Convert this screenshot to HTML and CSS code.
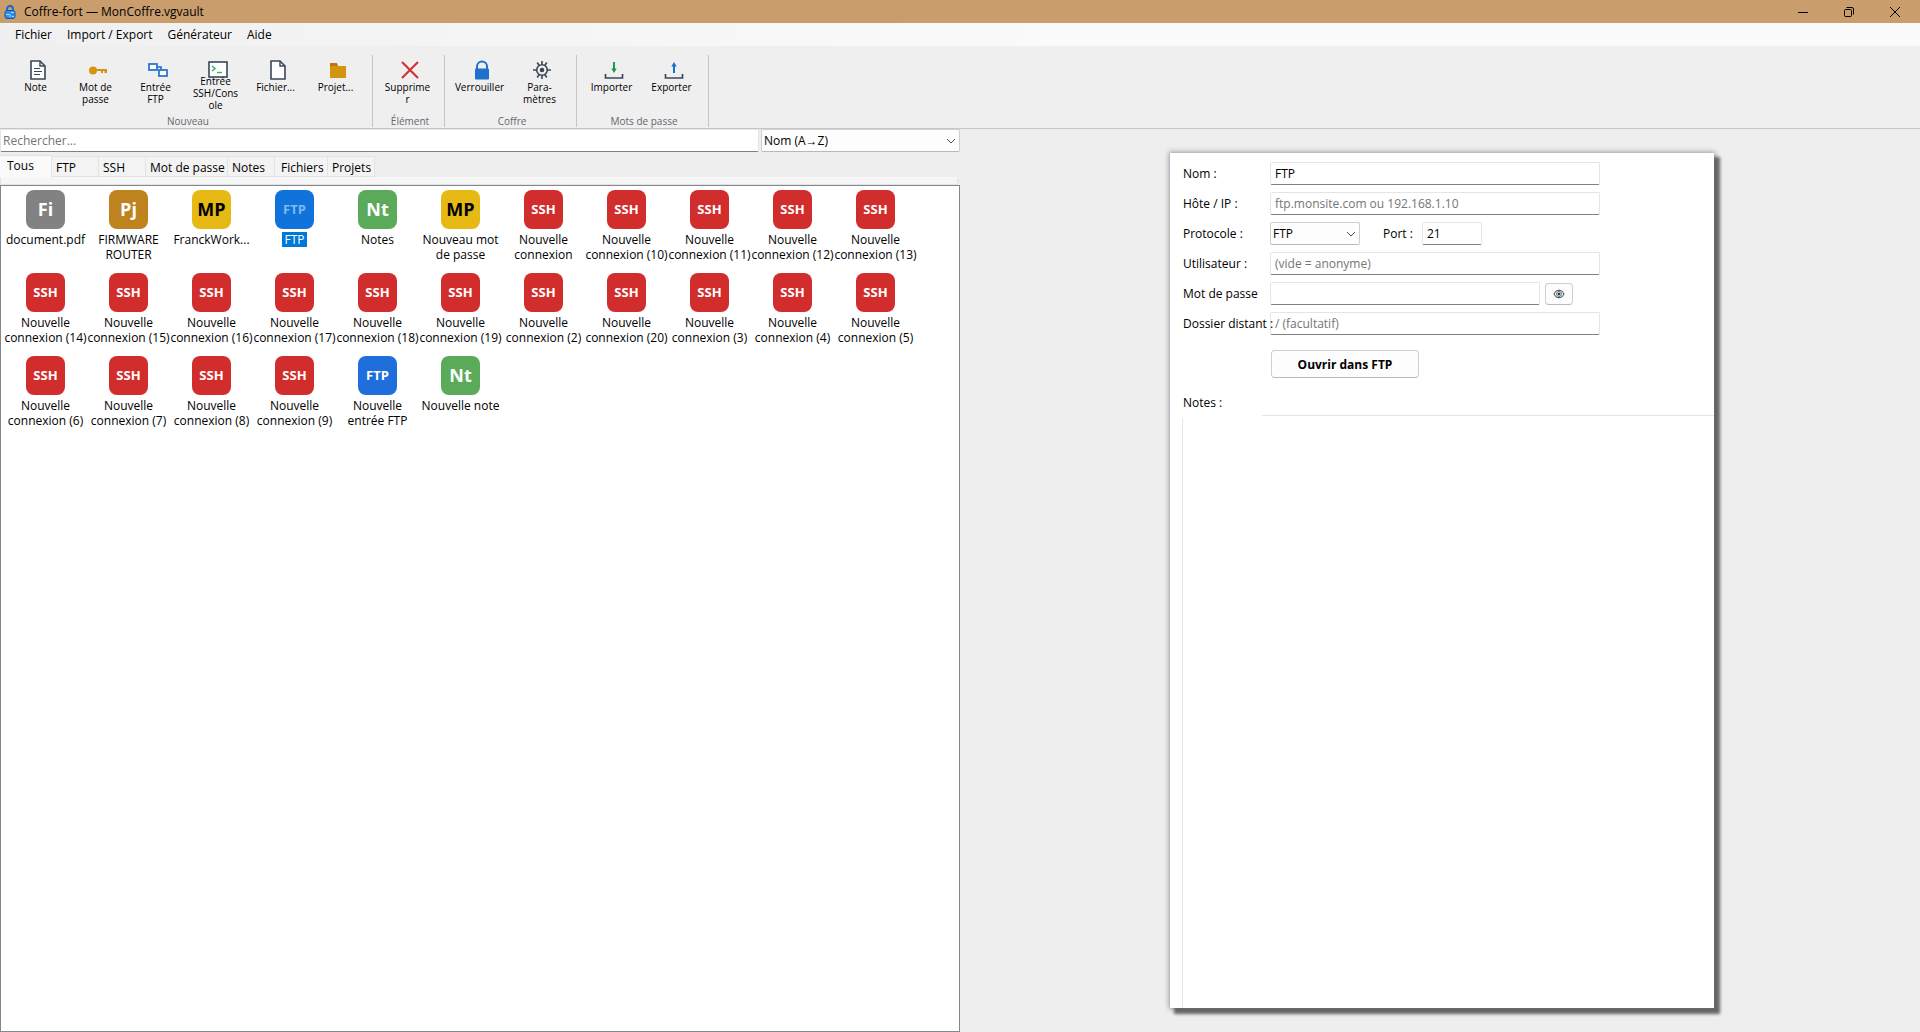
FILE: index.html
```html
<!DOCTYPE html>
<html lang="fr">
<head>
<meta charset="utf-8">
<title>Coffre-fort — MonCoffre.vgvault</title>
<link rel="stylesheet" href="styles.css">
</head>
<body>
<div class="app">
  <header class="titlebar">
    <svg class="app-icon" width="12" height="14" viewBox="0 0 12 14"><path d="M3 6V4a3 3 0 0 1 6 0v2" fill="none" stroke="#1668c8" stroke-width="1.8"/><rect x="1" y="5.500" width="10" height="8" rx="2" fill="#2f8df0" stroke="#1557b0"/><path d="M2 9.500h3M7 7.500h3M6 9v3M8 11.500h2" stroke="#a9dcff"/></svg>
    <span class="title">Coffre-fort — MonCoffre.vgvault</span>
    <div class="window-buttons">
      <button class="win" aria-label="Réduire"><svg width="12" height="12"><path d="M1 6.500h10" stroke="#000"/></svg></button>
      <button class="win" aria-label="Restaurer"><svg width="12" height="12" fill="none" stroke="#000"><rect x="1.500" y="3.500" width="7" height="7" rx="1"/><path d="M3.500 1.500h5.500a1.500 1.500 0 0 1 1.500 1.500v5.500"/></svg></button>
      <button class="win" aria-label="Fermer"><svg width="12" height="12"><path d="M1 1l10 10M11 1L1 11" stroke="#000"/></svg></button>
    </div>
  </header>

  <nav class="menubar">
    <button>Fichier</button><button>Import / Export</button><button>Générateur</button><button>Aide</button>
  </nav>

  <div class="ribbon">
    <section class="group">
      <div class="tools">
        <button class="tool"><svg width="20" height="20" viewBox="0 0 20 20"><path d="M3 1h9l5 5v13H3z" fill="#fff" stroke="#3b4758" stroke-width="1.600"/><path d="M12 1v5h5" fill="none" stroke="#3b4758" stroke-width="1.400"/><path d="M6 8.500h6M6 11.500h8M6 14.500h6" stroke="#3b4758" stroke-width="1.200"/></svg><span class="caption">Note</span></button>
        <button class="tool"><svg width="20" height="20" viewBox="0 0 20 20"><circle cx="5" cy="10.500" r="4" fill="#d4940f"/><path d="M8 9h11v4h-2.500v-2H15v2h-2v-2H8z" fill="#d4940f"/></svg><span class="caption">Mot de<br>passe</span></button>
        <button class="tool"><svg width="20" height="20" viewBox="0 0 20 20" fill="#fff" stroke="#1f70cc" stroke-width="1.700"><path d="M9 7h4v7" fill="none"/><rect x="1" y="4" width="8" height="6"/><rect x="11" y="10" width="8" height="6"/></svg><span class="caption">Entrée<br>FTP</span></button>
        <button class="tool"><svg width="20" height="20" viewBox="0 0 20 20"><rect x="1" y="2" width="18" height="15" fill="#fff" stroke="#3b4758" stroke-width="1.600"/><path d="M4 6l3 2.500L4 11" fill="none" stroke="#2fb963" stroke-width="1.600"/><path d="M9 12.500h5" stroke="#2fb963" stroke-width="1.400"/></svg><span class="caption tall">Entrée<br>SSH/Cons<br>ole</span></button>
        <button class="tool"><svg width="20" height="20" viewBox="0 0 20 20"><path d="M3 1h9l5 5v13H3z" fill="#fff" stroke="#3b4758" stroke-width="1.600"/><path d="M12 1v5h5" fill="none" stroke="#3b4758" stroke-width="1.400"/></svg><span class="caption">Fichier...</span></button>
        <button class="tool"><svg width="20" height="20" viewBox="0 0 20 20"><path d="M2 3h7l1 3H2z" fill="#b97812"/><path d="M2 6h16v12H2z" fill="#d4940f"/></svg><span class="caption">Projet...</span></button>
      </div>
      <h2>Nouveau</h2>
    </section>
    <section class="group">
      <div class="tools">
        <button class="tool"><svg width="20" height="20" viewBox="0 0 20 20"><path d="M2 2l16 16M18 2L2 18" stroke="#d03434" stroke-width="2.200"/></svg><span class="caption">Supprime<br>r</span></button>
      </div>
      <h2>Élément</h2>
    </section>
    <section class="group">
      <div class="tools">
        <button class="tool"><svg width="20" height="20" viewBox="0 0 20 20"><path d="M5 9V6.500a5 5 0 0 1 10 0V9" fill="none" stroke="#1f70cc" stroke-width="2"/><rect x="3" y="8.500" width="14" height="11" rx="1" fill="#1f70cc"/></svg><span class="caption">Verrouiller</span></button>
        <button class="tool"><svg width="20" height="20" viewBox="0 0 20 20" fill="none" stroke="#3b4758" stroke-width="1.600"><circle cx="10" cy="10" r="5.300"/><circle cx="10" cy="10" r="1.500" fill="#3b4758"/><path d="M10 1v3.500M10 15.500V19M1 10h3.500M15.500 10H19M5.200 2.500l2 3M14.800 2.500l-2 3M5.200 17.500l2-3M14.800 17.500l-2-3"/></svg><span class="caption">Para-<br>mètres</span></button>
      </div>
      <h2>Coffre</h2>
    </section>
    <section class="group">
      <div class="tools">
        <button class="tool"><svg width="20" height="20" viewBox="0 0 20 20"><path d="M1.500 14v4h17v-4" fill="none" stroke="#3b4758" stroke-width="1.700"/><path d="M10 2v8" stroke="#1d9850" stroke-width="2"/><path d="M7.300 8.500h5.400L10 13z" fill="#1d9850"/></svg><span class="caption">Importer</span></button>
        <button class="tool"><svg width="20" height="20" viewBox="0 0 20 20"><path d="M1.500 14v4h17v-4" fill="none" stroke="#3b4758" stroke-width="1.700"/><path d="M10 5v8" stroke="#1f70cc" stroke-width="2"/><path d="M7.300 6.500h5.400L10 2z" fill="#1f70cc"/></svg><span class="caption">Exporter</span></button>
      </div>
      <h2>Mots de passe</h2>
    </section>
  </div>

  <main class="workspace">
    <section class="browser">
      <div class="filters">
        <input class="field" type="text" placeholder="Rechercher..." aria-label="Rechercher">
        <div class="combo"><select aria-label="Tri"><option>Nom (A→Z)</option></select><svg width="10" height="6"><path d="M1 1l4 4 4-4" fill="none" stroke="#555"/></svg></div>
      </div>
      <div class="tabs" role="tablist">
        <button role="tab" class="tab active" aria-selected="true">Tous</button><button role="tab" class="tab short">FTP</button><button role="tab" class="tab short">SSH</button><button role="tab" class="tab wide">Mot de passe</button><button role="tab" class="tab short">Notes</button><button role="tab" class="tab mid">Fichiers</button><button role="tab" class="tab short">Projets</button>
      </div>
      <div class="tab-edge"></div>
      <ul class="items">
        <li><b class="tile file">Fi</b><span>document.pdf</span></li>
        <li><b class="tile project">Pj</b><span>FIRMWARE<br>ROUTER</span></li>
        <li><b class="tile password">MP</b><span>FranckWork...</span></li>
        <li class="selected"><b class="tile ftp">FTP</b><span>FTP</span></li>
        <li><b class="tile note">Nt</b><span>Notes</span></li>
        <li><b class="tile password">MP</b><span>Nouveau mot<br>de passe</span></li>
        <li><b class="tile ssh">SSH</b><span>Nouvelle<br>connexion</span></li>
        <li><b class="tile ssh">SSH</b><span>Nouvelle<br>connexion (10)</span></li>
        <li><b class="tile ssh">SSH</b><span>Nouvelle<br>connexion (11)</span></li>
        <li><b class="tile ssh">SSH</b><span>Nouvelle<br>connexion (12)</span></li>
        <li><b class="tile ssh">SSH</b><span>Nouvelle<br>connexion (13)</span></li>
        <li><b class="tile ssh">SSH</b><span>Nouvelle<br>connexion (14)</span></li>
        <li><b class="tile ssh">SSH</b><span>Nouvelle<br>connexion (15)</span></li>
        <li><b class="tile ssh">SSH</b><span>Nouvelle<br>connexion (16)</span></li>
        <li><b class="tile ssh">SSH</b><span>Nouvelle<br>connexion (17)</span></li>
        <li><b class="tile ssh">SSH</b><span>Nouvelle<br>connexion (18)</span></li>
        <li><b class="tile ssh">SSH</b><span>Nouvelle<br>connexion (19)</span></li>
        <li><b class="tile ssh">SSH</b><span>Nouvelle<br>connexion (2)</span></li>
        <li><b class="tile ssh">SSH</b><span>Nouvelle<br>connexion (20)</span></li>
        <li><b class="tile ssh">SSH</b><span>Nouvelle<br>connexion (3)</span></li>
        <li><b class="tile ssh">SSH</b><span>Nouvelle<br>connexion (4)</span></li>
        <li><b class="tile ssh">SSH</b><span>Nouvelle<br>connexion (5)</span></li>
        <li><b class="tile ssh">SSH</b><span>Nouvelle<br>connexion (6)</span></li>
        <li><b class="tile ssh">SSH</b><span>Nouvelle<br>connexion (7)</span></li>
        <li><b class="tile ssh">SSH</b><span>Nouvelle<br>connexion (8)</span></li>
        <li><b class="tile ssh">SSH</b><span>Nouvelle<br>connexion (9)</span></li>
        <li><b class="tile ftp">FTP</b><span>Nouvelle<br>entrée FTP</span></li>
        <li><b class="tile note">Nt</b><span>Nouvelle note</span></li>
      </ul>
    </section>

    <section class="detail">
      <form class="card">
        <div class="row"><label for="nom">Nom :</label><input class="field" id="nom" type="text" value="FTP"></div>
        <div class="row"><label for="hote">Hôte / IP :</label><input class="field" id="hote" type="text" placeholder="ftp.monsite.com ou 192.168.1.10"></div>
        <div class="row"><label for="proto">Protocole :</label><div class="combo protocol"><select id="proto"><option>FTP</option></select><svg width="10" height="6"><path d="M1 1l4 4 4-4" fill="none" stroke="#555"/></svg></div><label class="port-label" for="port">Port :</label><input class="field port" id="port" type="text" value="21"></div>
        <div class="row"><label for="user">Utilisateur :</label><input class="field" id="user" type="text" placeholder="(vide = anonyme)"></div>
        <div class="row"><label for="pass">Mot de passe</label><input class="field secret" id="pass" type="password"><button type="button" class="push eye" aria-label="Afficher le mot de passe"><svg width="12" height="10" viewBox="0 0 12 10" fill="none" stroke="#333"><path d="M1 5c2-5 8-5 10 0c-2 5-8 5-10 0z"/><circle cx="6" cy="5" r="2.500" stroke="#4a7a9a"/><circle cx="6" cy="5" r="1" fill="#000"/></svg></button></div>
        <div class="row"><label for="dir">Dossier distant :</label><input class="field" id="dir" type="text" placeholder="/ (facultatif)"></div>
        <button type="button" class="push open">Ouvrir dans FTP</button>
        <label class="notes-label" for="notes">Notes :</label>
        <textarea class="notes" id="notes"></textarea>
      </form>
    </section>
  </main>
</div>
</body>
</html>
```
FILE: styles.css
```css
* { box-sizing: border-box; }
body {
  margin: 0;
  background: #eeeeee;
  color: #000;
  font: 12px/15px "Open Sans", "Noto Sans", sans-serif;
}
button, input, select, textarea { font: inherit; color: inherit; margin: 0; }
button { border: 0; background: none; padding: 0; }
.app { min-height: 100vh; display: flex; flex-direction: column; }

.titlebar { display: flex; align-items: center; height: 23px; padding-left: 4px; background: #c99d6c; }
.title { margin-left: 8px; }
.window-buttons { display: flex; margin-left: auto; padding-right: 2px; }
.win { width: 46px; height: 20px; display: grid; place-items: center; }

.menubar { display: flex; gap: 15px; height: 23px; padding-left: 15px; background: linear-gradient(90deg, #f0f0f0, #fbfbfb 60%); }

.ribbon { display: flex; height: 83px; padding: 9px 0 1px 1px; background: #efefef; border-bottom: 1px solid #c6c6c6; }
.group { display: flex; flex-direction: column; padding: 0 4px 0 7px; border-right: 1px solid #c6c6c6; }
.tools { display: flex; flex: 1; align-items: flex-start; }
.tool { display: flex; flex-direction: column; align-items: center; width: 60px; padding-top: 5px; font-size: 10px; line-height: 12px; }
.tool svg { flex: none; }
.caption { height: 24px; margin-top: 1px; padding-right: 5px; }
.caption.tall { height: 36px; margin-top: -5px; }
.group h2 { margin: 0; font-size: 10px; font-weight: 400; line-height: 12px; text-align: center; color: #666670; }

.workspace { display: grid; grid-template-columns: 1fr 1fr; flex: 1; }
.browser { display: flex; flex-direction: column; }
.filters { display: grid; grid-template-columns: 1fr 199px; gap: 2px; }
.field { width: 100%; height: 23px; padding: 0 2px; border: 1px solid #e5e5e5; border-bottom-color: #808080; border-radius: 2px; background: #fff; outline: 0; }
.field::placeholder { color: #757575; opacity: 1; }
.combo { display: grid; grid-template-columns: 1fr; align-items: center; height: 23px; border: 1px solid #cfcfcf; border-bottom-color: #b8b8b8; border-radius: 2px; background: #fdfdfd; }
.combo > * { grid-area: 1 / 1; }
.combo select { appearance: none; width: 100%; border: 0; padding: 0 2px; background: none; }
.combo svg { justify-self: end; margin-right: 3px; }

.tabs { display: flex; align-items: flex-end; height: 25px; padding-top: 3px; }
.tab { height: 21px; padding: 2px 0 0 4px; border: 1px solid #e3e3e3; border-left-width: 0; background: #f3f3f3; text-align: left; white-space: nowrap; }
.tab.active { width: 52px; height: 22px; padding: 0 0 3px 7px; background: #fafafa; border-bottom: 0; }
.tab.short { width: 47px; }
.tab.wide { width: 82px; }
.tab.mid { width: 53px; padding-left: 6px; }
.tab-edge { height: 8px; margin-right: 2px; border: 1px solid #e3e3e3; border-top-color: #f8f8f8; background: #f6f6f6; }

.items { flex: 1; display: grid; grid-template-columns: repeat(auto-fill, 83px); grid-auto-rows: 83px; margin: 0; padding: 4px 3px; border: 1px solid #828790; background: #fff; list-style: none; }
.items li { display: flex; flex-direction: column; align-items: center; text-align: center; white-space: nowrap; }
.items li > span { margin-top: 3px; padding: 0 2px; }
.tile { display: grid; place-items: center; width: 39px; height: 39px; border-radius: 8px; color: #fff; font-size: 18px; }
.file { background: #828282; }
.project { background: #be821e; }
.password { background: #e6b914; color: #000; }
.note { background: #5aaa5a; }
.ftp { background: #1e6edc; font-size: 13px; }
.ssh { background: #d22d2d; font-size: 13px; }
.selected .tile { background: #0f73db; color: #80b8ec; }
.selected > span { background: #0078d7; color: #fff; }

.detail { display: flex; justify-content: center; padding: 24px 0 24px 4px; }
.card { display: flex; flex-direction: column; gap: 7px; width: 544px; padding: 9px 0 0 12px; background: #fff; box-shadow: 5px 5px 3px 1px #666, 0 0 5px 1px #999; }
.row { display: flex; align-items: center; height: 23px; padding-left: 1px; white-space: nowrap; }
.row label:first-child { flex: none; width: 87px; z-index: 1; }
.row .field { width: 330px; padding-left: 4px; }
.row .field.port { width: 60px; }
.row .field.secret { width: 270px; }
.protocol { width: 90px; }
.row .port-label { width: 62px; padding-left: 23px; }
.push { border: 1px solid #cfcfcf; border-bottom-color: #b8b8b8; border-radius: 4px; background: #fdfdfd; }
.eye { display: grid; place-items: center; width: 28px; height: 22px; margin-left: 5px; }
.open { width: 148px; height: 28px; margin: 8px 0 0 89px; font-weight: 700; }
.notes-label { position: relative; width: 80px; height: 23px; margin: 10px 0 -10px; padding-left: 1px; background: #fff; }
.notes { flex: 1; width: 100%; border: 1px solid #e5e5e5; border-width: 1px 0 0 1px; outline: 0; resize: none; background: #fff; }
```
